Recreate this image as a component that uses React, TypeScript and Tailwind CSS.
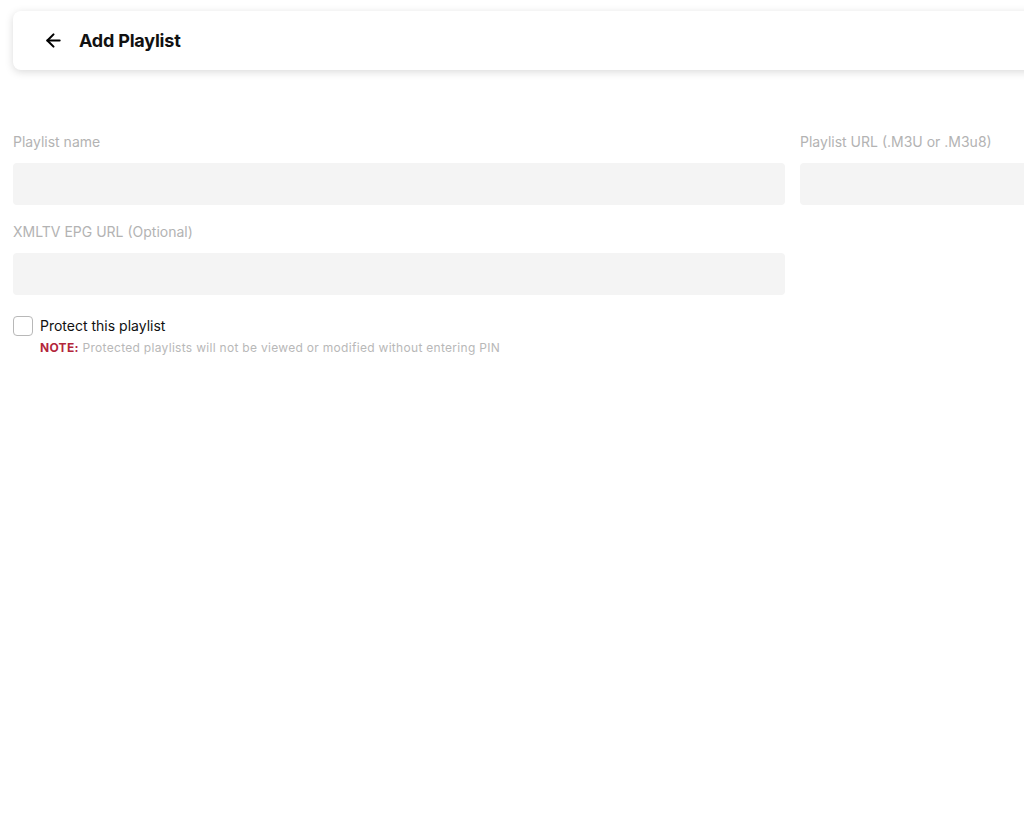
import { ArrowLeft } from "lucide-react";

type FieldProps = {
  label: string;
  name: string;
};

function Field({ label, name }: FieldProps) {
  return (
    <label className="flex flex-col">
      <span className="h-[20px] text-[14px] leading-[20px] text-[#b3b3b3]">{label}</span>
      <input
        className="mt-[11px] h-[42px] rounded-[4px] bg-[#f4f4f4] px-3 text-sm text-[#222] outline-none"
        name={name}
        type="text"
      />
    </label>
  );
}

export default function App() {
  return (
    <div
      className="h-[814px] w-full overflow-hidden bg-white"
      style={{ fontFamily: "Inter, 'Noto Sans', sans-serif" }}
    >
      <div className="w-[1572px] pl-[13px] pt-[11px]">
        <header className="flex h-[59px] items-center gap-[15px] rounded-[8px] bg-white pl-[30px] shadow-[0_2px_8px_rgba(0,0,0,0.15)]">
          <ArrowLeft className="h-[21px] w-[21px] text-black" strokeWidth={2.4} />
          <h1 className="text-[18px] font-bold tracking-[-0.2px] text-[#111]">Add Playlist</h1>
        </header>

        <form className="mt-[62px]">
          <div className="grid grid-cols-2 gap-x-[15px] gap-y-[17px]">
            <Field label="Playlist name" name="name" />
            <Field label="Playlist URL (.M3U or .M3u8)" name="url" />
            <Field label="XMLTV EPG URL (Optional)" name="epg" />
          </div>

          <div className="mt-[21px] flex items-start gap-[7px]">
            <input
              className="h-[20px] w-[20px] shrink-0 appearance-none rounded-[4px] border border-[#b8b8b8] bg-white"
              id="protect"
              type="checkbox"
            />
            <div className="flex flex-col">
              <label className="text-[14px] leading-[20px] text-[#111]" htmlFor="protect">
                Protect this playlist
              </label>
              <p className="mt-[4px] text-[12px] leading-[16px] tracking-[0.3px] text-[#b8b8b8]">
                <span className="font-bold text-[#b3263b]">NOTE:</span> Protected playlists will not be viewed or
                modified without entering PIN
              </p>
            </div>
          </div>
        </form>
      </div>
    </div>
  );
}
